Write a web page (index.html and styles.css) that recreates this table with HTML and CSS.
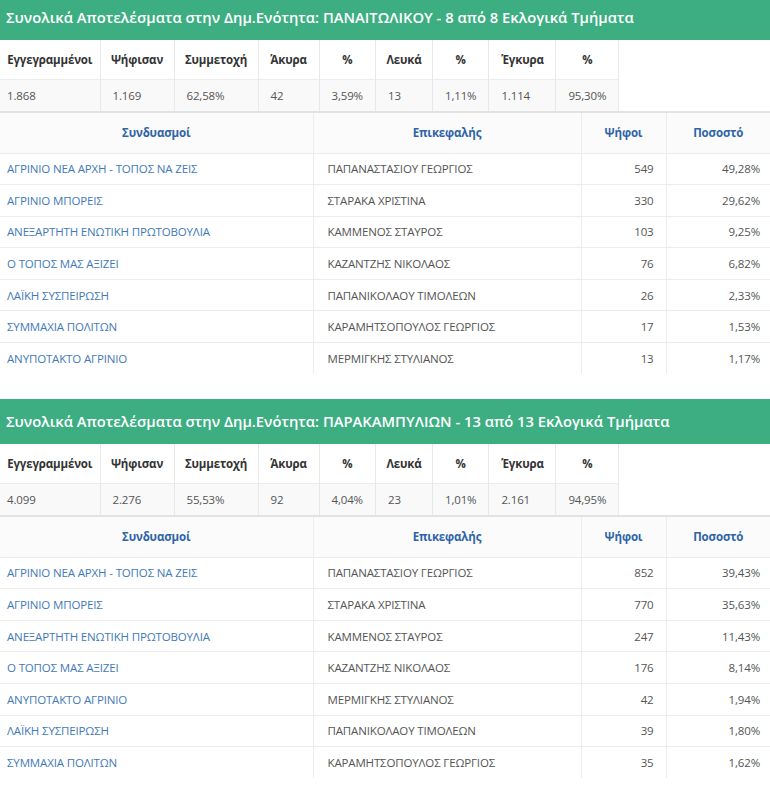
FILE: index.html
```html
<!DOCTYPE html>
<html lang="el">
<head>
<meta charset="utf-8">
<title>Αποτελέσματα</title>
<link rel="stylesheet" href="styles.css">
</head>
<body>
<div class="page">
  <section class="unit">
    <div class="title">Συνολικά Αποτελέσματα στην Δημ.Ενότητα: ΠΑΝΑΙΤΩΛΙΚΟΥ - 8 από 8 Εκλογικά Τμήματα</div>
    <table class="stats">
      <thead>
        <tr><th class="c1">Εγγεγραμμένοι</th><th class="c2">Ψήφισαν</th><th class="c3">Συμμετοχή</th><th class="c4">Άκυρα</th><th class="c5">%</th><th class="c6">Λευκά</th><th class="c7">%</th><th class="c8">Έγκυρα</th><th class="c9">%</th></tr>
      </thead>
      <tbody>
        <tr><td class="first">1.868</td><td>1.169</td><td>62,58%</td><td>42</td><td class="pct">3,59%</td><td>13</td><td class="pct">1,11%</td><td>1.114</td><td class="pct">95,30%</td></tr>
      </tbody>
    </table>
    <table class="results">
      <thead>
        <tr><th class="r1">Συνδυασμοί</th><th class="r2">Επικεφαλής</th><th class="r3">Ψήφοι</th><th class="r4">Ποσοστό</th></tr>
      </thead>
      <tbody>
        <tr><td class="party">ΑΓΡΙΝΙΟ ΝΕΑ ΑΡΧΗ - ΤΟΠΟΣ ΝΑ ΖΕΙΣ</td><td class="lead">ΠΑΠΑΝΑΣΤΑΣΙΟΥ ΓΕΩΡΓΙΟΣ</td><td class="num">549</td><td class="num">49,28%</td></tr>
        <tr><td class="party">ΑΓΡΙΝΙΟ ΜΠΟΡΕΙΣ</td><td class="lead">ΣΤΑΡΑΚΑ ΧΡΙΣΤΙΝΑ</td><td class="num">330</td><td class="num">29,62%</td></tr>
        <tr><td class="party">ΑΝΕΞΑΡΤΗΤΗ ΕΝΩΤΙΚΗ ΠΡΩΤΟΒΟΥΛΙΑ</td><td class="lead">ΚΑΜΜΕΝΟΣ ΣΤΑΥΡΟΣ</td><td class="num">103</td><td class="num">9,25%</td></tr>
        <tr><td class="party">Ο ΤΟΠΟΣ ΜΑΣ ΑΞΙΖΕΙ</td><td class="lead">ΚΑΖΑΝΤΖΗΣ ΝΙΚΟΛΑΟΣ</td><td class="num">76</td><td class="num">6,82%</td></tr>
        <tr><td class="party">ΛΑΪΚΗ ΣΥΣΠΕΙΡΩΣΗ</td><td class="lead">ΠΑΠΑΝΙΚΟΛΑΟΥ ΤΙΜΟΛΕΩΝ</td><td class="num">26</td><td class="num">2,33%</td></tr>
        <tr><td class="party">ΣΥΜΜΑΧΙΑ ΠΟΛΙΤΩΝ</td><td class="lead">ΚΑΡΑΜΗΤΣΟΠΟΥΛΟΣ ΓΕΩΡΓΙΟΣ</td><td class="num">17</td><td class="num">1,53%</td></tr>
        <tr><td class="party">ΑΝΥΠΟΤΑΚΤΟ ΑΓΡΙΝΙΟ</td><td class="lead">ΜΕΡΜΙΓΚΗΣ ΣΤΥΛΙΑΝΟΣ</td><td class="num">13</td><td class="num">1,17%</td></tr>
      </tbody>
    </table>
  </section>

  <section class="unit">
    <div class="title">Συνολικά Αποτελέσματα στην Δημ.Ενότητα: ΠΑΡΑΚΑΜΠΥΛΙΩΝ - 13 από 13 Εκλογικά Τμήματα</div>
    <table class="stats">
      <thead>
        <tr><th class="c1">Εγγεγραμμένοι</th><th class="c2">Ψήφισαν</th><th class="c3">Συμμετοχή</th><th class="c4">Άκυρα</th><th class="c5">%</th><th class="c6">Λευκά</th><th class="c7">%</th><th class="c8">Έγκυρα</th><th class="c9">%</th></tr>
      </thead>
      <tbody>
        <tr><td class="first">4.099</td><td>2.276</td><td>55,53%</td><td>92</td><td class="pct">4,04%</td><td>23</td><td class="pct">1,01%</td><td>2.161</td><td class="pct">94,95%</td></tr>
      </tbody>
    </table>
    <table class="results">
      <thead>
        <tr><th class="r1">Συνδυασμοί</th><th class="r2">Επικεφαλής</th><th class="r3">Ψήφοι</th><th class="r4">Ποσοστό</th></tr>
      </thead>
      <tbody>
        <tr><td class="party">ΑΓΡΙΝΙΟ ΝΕΑ ΑΡΧΗ - ΤΟΠΟΣ ΝΑ ΖΕΙΣ</td><td class="lead">ΠΑΠΑΝΑΣΤΑΣΙΟΥ ΓΕΩΡΓΙΟΣ</td><td class="num">852</td><td class="num">39,43%</td></tr>
        <tr><td class="party">ΑΓΡΙΝΙΟ ΜΠΟΡΕΙΣ</td><td class="lead">ΣΤΑΡΑΚΑ ΧΡΙΣΤΙΝΑ</td><td class="num">770</td><td class="num">35,63%</td></tr>
        <tr><td class="party">ΑΝΕΞΑΡΤΗΤΗ ΕΝΩΤΙΚΗ ΠΡΩΤΟΒΟΥΛΙΑ</td><td class="lead">ΚΑΜΜΕΝΟΣ ΣΤΑΥΡΟΣ</td><td class="num">247</td><td class="num">11,43%</td></tr>
        <tr><td class="party">Ο ΤΟΠΟΣ ΜΑΣ ΑΞΙΖΕΙ</td><td class="lead">ΚΑΖΑΝΤΖΗΣ ΝΙΚΟΛΑΟΣ</td><td class="num">176</td><td class="num">8,14%</td></tr>
        <tr><td class="party">ΑΝΥΠΟΤΑΚΤΟ ΑΓΡΙΝΙΟ</td><td class="lead">ΜΕΡΜΙΓΚΗΣ ΣΤΥΛΙΑΝΟΣ</td><td class="num">42</td><td class="num">1,94%</td></tr>
        <tr><td class="party">ΛΑΪΚΗ ΣΥΣΠΕΙΡΩΣΗ</td><td class="lead">ΠΑΠΑΝΙΚΟΛΑΟΥ ΤΙΜΟΛΕΩΝ</td><td class="num">39</td><td class="num">1,80%</td></tr>
        <tr><td class="party">ΣΥΜΜΑΧΙΑ ΠΟΛΙΤΩΝ</td><td class="lead">ΚΑΡΑΜΗΤΣΟΠΟΥΛΟΣ ΓΕΩΡΓΙΟΣ</td><td class="num">35</td><td class="num">1,62%</td></tr>
      </tbody>
    </table>
  </section>
</div>
</body>
</html>
```

FILE: styles.css
```css
html, body {
  margin: 0;
  padding: 0;
  background: #ffffff;
}
body {
  font-family: "Open Sans", "Noto Sans", "DejaVu Sans", sans-serif;
  font-size: 11.5px;
  letter-spacing: -0.15px;
  color: #555555;
}
.page {
  margin-top: -5px;
}
.unit {
  margin-bottom: 25px;
}
.title {
  background: #3cae82;
  color: #ffffff;
  font-size: 14.75px;
  letter-spacing: 0;
  font-weight: 600;
  height: 45px;
  line-height: 45px;
  padding-left: 6px;
  white-space: nowrap;
  overflow: hidden;
}
table {
  border-collapse: collapse;
  border-spacing: 0;
  table-layout: fixed;
}
th, td {
  box-sizing: border-box;
}
.stats th {
  height: 39px;
  padding: 0 2px;
  font-weight: 700;
  color: #333333;
  text-align: center;
  border-right: 1px solid #e8e8e8;
  white-space: nowrap;
}
.stats td {
  height: 32px;
  padding: 0 12px;
  background: #f9f9f9;
  border-right: 1px solid #e8e8e8;
  border-top: 1px solid #ececec;
  text-align: left;
  white-space: nowrap;
}
.stats td.first { padding-left: 7px; }
.stats td.pct { text-align: right; }
.stats .c1 { width: 100px; }
.stats .c2 { width: 74px; }
.stats .c3 { width: 84px; }
.stats .c4 { width: 61px; }
.stats .c5 { width: 56px; }
.stats .c6 { width: 57px; }
.stats .c7 { width: 54px; }
.stats .c8 { width: 67px; }
.stats .c9 { width: 61px; }

.results {
  width: 100%;
  border-top: 2px solid #e2e2e2;
}
.results th {
  height: 41px;
  padding: 0 8px;
  background: #fbfbfb;
  color: #2e64a8;
  font-weight: 700;
  text-align: center;
  border-right: 1px solid #ececec;
}
.results th:last-child,
.results td:last-child { border-right: none; }
.results .r1 { width: 313px; }
.results .r2 { width: 268px; }
.results .r3 { width: 85px; }
.results td {
  height: 31.6px;
  padding: 0 12px;
  border-top: 1px solid #ececec;
  border-right: 1px solid #ececec;
  white-space: nowrap;
}
.results td.party {
  padding-left: 7px;
  color: #3f7ab8;
}
.results td.lead {
  padding-left: 14px;
  color: #555555;
}
.results td.num {
  text-align: right;
  padding-right: 12px;
}
.results td:last-child { padding-right: 10px; }
```
